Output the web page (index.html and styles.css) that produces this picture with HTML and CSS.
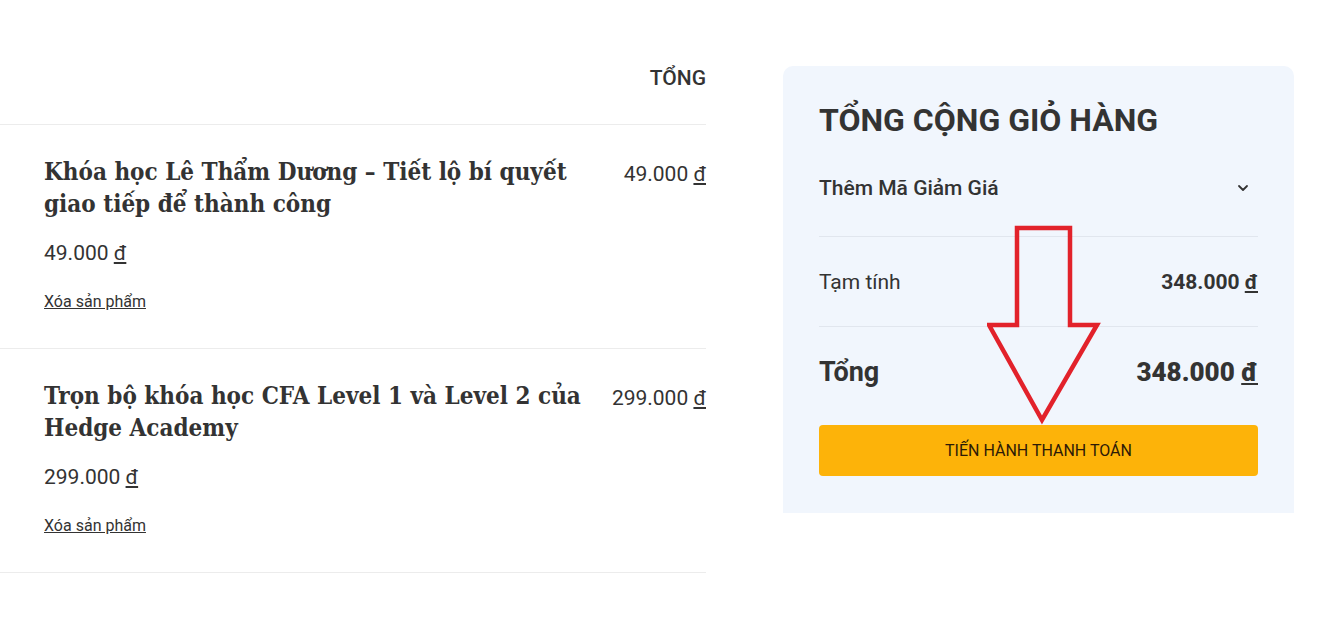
FILE: index.html
```html
<!DOCTYPE html>
<html lang="vi">
<head>
    <meta charset="UTF-8">
    <title>Giỏ hàng</title>
    <link rel="stylesheet" href="styles.css">
</head>
<body>
    <div class="cart-page">
        <!-- Bang san pham -->
        <div class="cart-items">
            <div class="cart-head">TỔNG</div>
            <div class="cart-item">
                <div class="item-info">
                    <h3 class="item-title">Khóa học Lê Thẩm Dương – Tiết lộ bí quyết giao tiếp để thành công</h3>
                    <div class="item-price">49.000 <u>đ</u></div>
                    <a href="#" class="item-remove">Xóa sản phẩm</a>
                </div>
                <div class="item-total">49.000 <u>đ</u></div>
            </div>
            <div class="cart-item">
                <div class="item-info">
                    <h3 class="item-title">Trọn bộ khóa học CFA Level 1 và Level 2 của Hedge Academy</h3>
                    <div class="item-price">299.000 <u>đ</u></div>
                    <a href="#" class="item-remove">Xóa sản phẩm</a>
                </div>
                <div class="item-total">299.000 <u>đ</u></div>
            </div>
        </div>
        <!-- Tong cong -->
        <div class="cart-totals">
            <h2>TỔNG CỘNG GIỎ HÀNG</h2>
            <div class="coupon-row">
                <span>Thêm Mã Giảm Giá</span>
                <svg width="14" height="14" viewBox="0 0 14 14"><path d="M3 5l4 4 4-4" fill="none" stroke="#333" stroke-width="1.8" stroke-linecap="round" stroke-linejoin="round"/></svg>
            </div>
            <div class="sum-row subtotal">
                <span>Tạm tính</span>
                <strong>348.000 <u>đ</u></strong>
            </div>
            <div class="sum-row grand">
                <span>Tổng</span>
                <strong>348.000 <u>đ</u></strong>
            </div>
            <button class="checkout-btn">TIẾN HÀNH THANH TOÁN</button>
        </div>
    </div>
    <!-- mui ten chu thich -->
    <svg class="arrow-note" width="120" height="204" viewBox="0 0 120 204">
        <path d="M30 3 H83 V100 H110 L55 195 L2 100 H30 Z" fill="none" stroke="#e2222b" stroke-width="4.5" stroke-linejoin="miter"/>
    </svg>
</body>
</html>
```

FILE: styles.css
```css
body { margin: 0; font-family: Roboto, "Noto Sans", sans-serif; color: #333; background: #fff; }
.cart-page {
    display: flex;
    align-items: flex-start;
    gap: 77px;
    padding-top: 66px;
    width: 1294px;
}
.cart-items { width: 706px; }
.cart-head {
    text-align: right;
    font-weight: 500;
    font-size: 21px;
    line-height: 24px;
    padding: 0 0 34px;
    border-bottom: 1px solid #ececec;
}
.cart-item {
    display: flex;
    justify-content: space-between;
    padding: 31px 0 36px 44px;
    border-bottom: 1px solid #ececec;
}
.item-info { width: 545px; }
.item-title {
    margin: 0;
    font-family: "DejaVu Serif", serif;
    font-stretch: condensed;
    font-weight: 700;
    font-size: 24px;
    line-height: 32px;
    color: #333;
}
.item-price {
    font-size: 21px;
    font-weight: 400;
    margin-top: 21px;
    line-height: 24px;
}
.item-remove {
    display: inline-block;
    margin-top: 27px;
    font-size: 16px;
    color: #333;
    line-height: 20px;
}
.item-total {
    font-size: 21px;
    line-height: 24px;
    padding-top: 6px;
    white-space: nowrap;
}
.cart-totals {
    width: 439px;
    background: #f1f6fd;
    border-radius: 10px 10px 0 0;
    padding: 34px 36px 37px;
}
.cart-totals h2 {
    margin: 0;
    font-size: 32px;
    line-height: 40px;
    font-weight: 700;
    color: #333;
}
.coupon-row {
    display: flex;
    justify-content: space-between;
    align-items: center;
    font-size: 21px;
    font-weight: 500;
    padding: 36px 0 36px;
    border-bottom: 1px solid #e1e6ee;
}
.coupon-row svg { margin-right: 8px; }
.sum-row {
    display: flex;
    justify-content: space-between;
    align-items: center;
}
.subtotal {
    font-size: 21px;
    padding: 33px 0 32px;
    border-bottom: 1px solid #e1e6ee;
}
.subtotal strong { font-weight: 700; }
.grand {
    font-size: 27px;
    font-weight: 700;
    padding: 29px 0 37px;
}
.grand strong { font-size: 26px; }
.checkout-btn {
    display: block;
    width: 100%;
    height: 51px;
    border: none;
    border-radius: 4px;
    background: #fdb309;
    color: #2c1a07;
    font-family: Roboto, sans-serif;
    font-size: 16px;
    cursor: pointer;
}
.arrow-note {
    position: absolute;
    left: 987px;
    top: 225px;
}
```
